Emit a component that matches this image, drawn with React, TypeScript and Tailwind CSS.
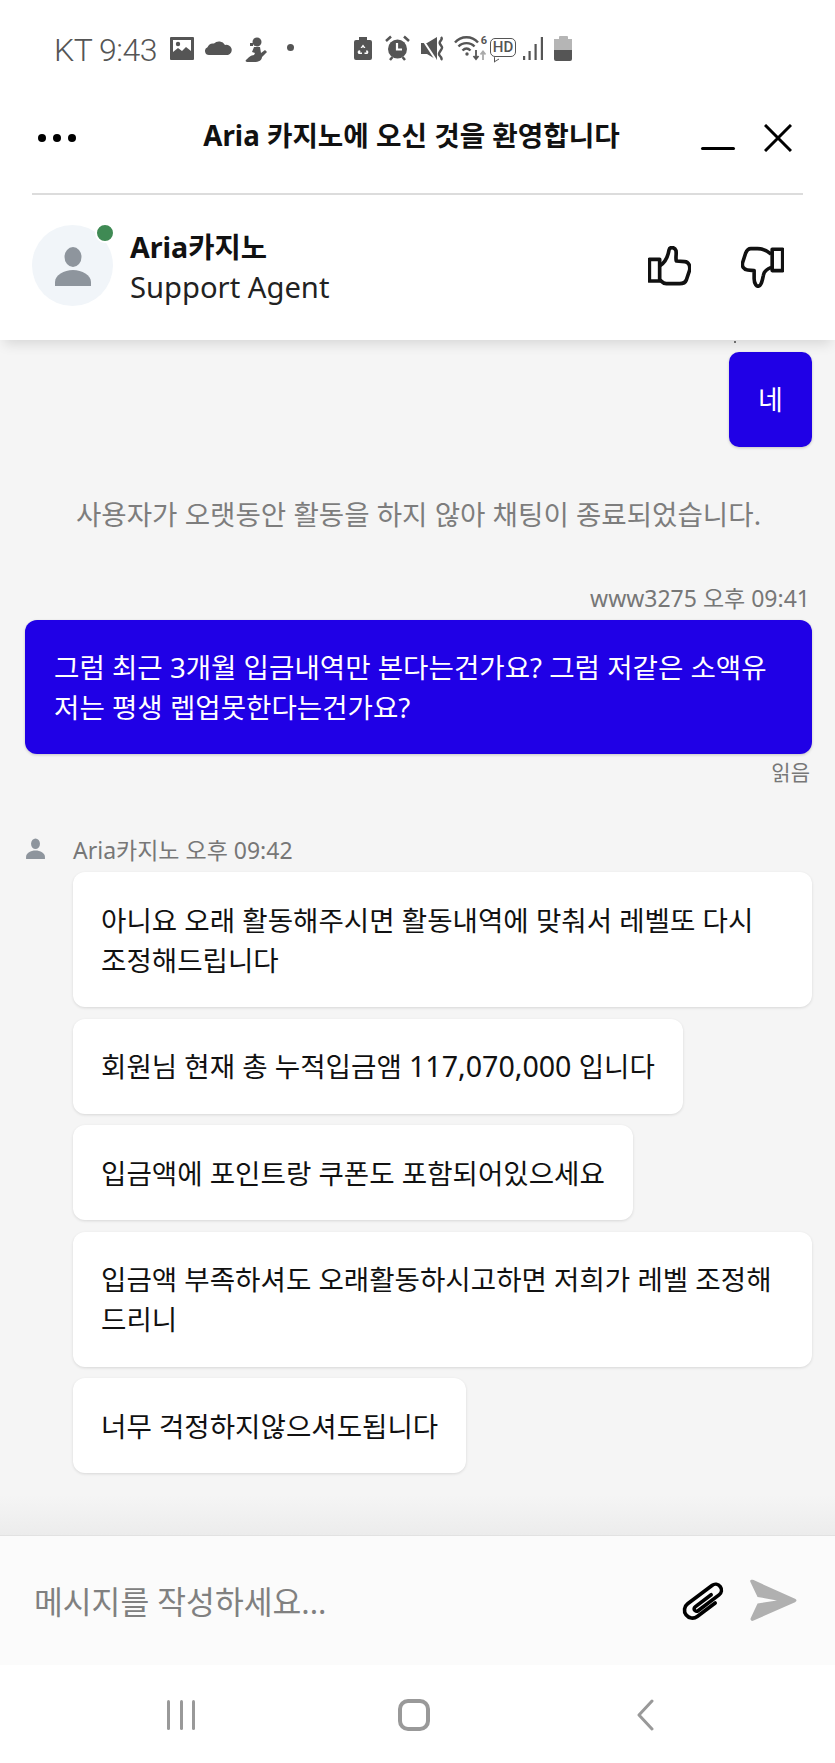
const agentMessages: React.ReactNode[][] = [
    ["아니요 오래 활동해주시면 활동내역에 맞춰서 레벨또 다시", "조정해드립니다"],
    [<>회원님 현재 총 누적입금앰 <span className="text-[28.6px]">117,070,000</span> 입니다</>],
    ["입금액에 포인트랑 쿠폰도 포함되어있으세요"],
    ["입금액 부족하셔도 오래활동하시고하면 저희가 레벨 조정해", "드리니"],
    ["너무 걱정하지않으셔도됩니다"],
];

const PersonIcon: React.FC<{ className: string }> = ({ className }) => (
    <svg viewBox="0 0 40 40" className={className} fill="#8e959d">
        <ellipse cx="20" cy="11" rx="8.5" ry="10" />
        <path d="M2 40v-4c0-7 9-12 18-12s18 5 18 12v4z" />
    </svg>
);

const StatusBar: React.FC = () => (
    <div className="h-[95px] flex items-start pt-[33px] pl-[54px] text-[#555555]">
        <span className="text-[32px] leading-[34px] tracking-[-0.5px] font-['Roboto',sans-serif] font-light w-[104px] whitespace-nowrap">KT 9:43</span>
        <svg viewBox="0 0 24 23" className="w-[24px] h-[23px] ml-[12px] mt-[4px]" fill="#555555">
            <path fillRule="evenodd" d="M1 0h22a1 1 0 0 1 1 1v21a1 1 0 0 1-1 1H1a1 1 0 0 1-1-1V1a1 1 0 0 1 1-1zM3 3v12l5-4 4 3 4-4 5 4V3z" />
            <circle cx="8" cy="7" r="2.2" />
        </svg>
        <svg viewBox="0 0 27 15" className="w-[27px] h-[15px] ml-[11px] mt-[7px]" fill="#555555">
            <path d="M4 15a4 4 0 0 1-1.500-7.700A6 6 0 0 1 9 3.500 7 7 0 0 1 20 5a5 5 0 0 1 3 10z" />
        </svg>
        <svg viewBox="0 0 22 25" className="w-[22px] h-[25px] ml-[13px] mt-[4px]" fill="#555555">
            <circle cx="12" cy="5" r="4.500" />
            <path d="M5 6h3v3H5zM9 10h6l1 6 4-3 2 2-5 5c0 3-3 5-8 5H2c-1 0-2-1-1-2 2-2 5-5 8-5l1-2-3-1z" />
        </svg>
        <div className="w-[7px] h-[7px] rounded-full bg-[#555555] ml-[20px] mt-[11px]" />
        <svg viewBox="0 0 18 23" className="w-[18px] h-[23px] ml-[60px] mt-[4px]" fill="#555555">
            <path d="M5 0h8v3h3a2 2 0 0 1 2 2v16a2 2 0 0 1-2 2H2a2 2 0 0 1-2-2V5a2 2 0 0 1 2-2h3z" />
            <path d="M9 7.500l2.500 3.500H10l-1-1-1 1H6.500zM5 13l1.500 1-.5 1.500h2V17H4.500L3.500 15zM13 13l1.500 2-1 2H10.500v-1.500h2L12 14z" fill="#ffffff" />
        </svg>
        <svg viewBox="0 0 25 26" className="w-[25px] h-[26px] ml-[13px] mt-[2px]">
            <circle cx="12.500" cy="14" r="9.500" fill="#555555" />
            <path d="M12 8v6.500h5" stroke="#ffffff" strokeWidth="2.200" fill="none" />
            <path d="M1 6l5-4.500M24 6l-5-4.500M5 25l2.500-3M20 25l-2.500-3" stroke="#555555" strokeWidth="2.500" />
        </svg>
        <svg viewBox="0 0 24 25" className="w-[24px] h-[25px] ml-[11px] mt-[3px]" fill="#555555">
            <path d="M0 7h6l10-6v23L6 18H0z" />
            <path d="M0 1l15 23" stroke="#ffffff" strokeWidth="2" />
            <path d="M20 1c3 3-3 4-1 7s3 3 1 6-3 4-1 6 2 3 1 4" stroke="#555555" strokeWidth="2.400" fill="none" />
        </svg>
        <div className="relative w-[33px] h-[26px] ml-[9px] mt-[2px]">
            <svg viewBox="0 0 33 26" className="w-[33px] h-[26px]" fill="none" stroke="#555555" strokeWidth="2.400">
                <path d="M1 7.500c6-7 17-7 23 0M4.500 11.500c4-4.500 12-4.500 16 0M8.500 15.500c2.500-2.500 5.500-2.500 8 0" />
                <circle cx="13" cy="19" r="1.700" fill="#555555" stroke="none" />
                <path d="M22 15v9M19.500 21l2.500 3 2.500-3" strokeWidth="1.800" />
                <path d="M29 25v-8M26.500 19.500l2.500-3 2.500 3" stroke="#aaaaaa" strokeWidth="1.800" />
            </svg>
            <span className="absolute right-[0px] top-[0px] text-[11px] leading-[11px] font-bold font-['Roboto',sans-serif]">6</span>
        </div>
        <div className="relative w-[26px] h-[19px] ml-[3px] mt-[5px] border-[1.5px] border-[#555555] rounded-[5px] flex items-center justify-center text-[15px] leading-none font-medium font-['Roboto',sans-serif]">
            HD
            <div className="absolute left-[3px] bottom-[-5px] w-[5px] h-[5px] border-l-[1.5px] border-b-[1.5px] border-[#555555] -skew-y-[30deg]" />
        </div>
        <svg viewBox="0 0 20 23" className="w-[20px] h-[23px] ml-[7px] mt-[4px]" fill="#555555">
            <rect x="0" y="19" width="2.200" height="4" />
            <rect x="5.500" y="14" width="2.200" height="9" />
            <rect x="11.500" y="7" width="2.200" height="16" />
            <rect x="17.800" y="0" width="2.200" height="23" />
        </svg>
        <div className="w-[18px] h-[25px] ml-[11px] mt-[3px] flex flex-col items-center">
            <div className="w-[9px] h-[3px] bg-[#b5b5b5] rounded-t-[1px]" />
            <div className="w-full h-[11px] bg-[#b5b5b5]" />
            <div className="w-full h-[11px] bg-[#555555] rounded-b-[2px]" />
        </div>
    </div>
);

const Header: React.FC = () => (
    <div className="relative z-10 h-[245px] bg-white shadow-[0_8px_12px_-4px_rgba(0,0,0,0.12)]">
        <div className="mx-[32px] h-[100px] border-b-2 border-[#dcdcdc] flex items-start relative">
            <div className="flex gap-[7px] ml-[6px] mt-[39px]">
                <div className="w-[8px] h-[8px] rounded-full bg-black" />
                <div className="w-[8px] h-[8px] rounded-full bg-black" />
                <div className="w-[8px] h-[8px] rounded-full bg-black" />
            </div>
            <div className="flex-1 text-center pl-[110px] pr-[64px] text-[27.7px] leading-[38px] mt-[21px] font-bold text-[#111111] whitespace-nowrap">Aria 카지노에 오신 것을 환영합니다</div>
            <div className="w-[34px] h-[3px] bg-black mt-[52px] rounded-full" />
            <svg viewBox="0 0 28 28" className="w-[28px] h-[28px] ml-[29px] mt-[29px] mr-[11px]" fill="none" stroke="#000000" strokeWidth="3">
                <path d="M1 1l26 26M27 1L1 27" />
            </svg>
        </div>
        <div className="flex items-start mx-[32px] mt-[30px]">
            <div className="relative w-[81px] h-[81px] rounded-full bg-[#f1f5f9] flex items-center justify-center">
                <PersonIcon className="w-[40px] h-[40px]" />
                <div className="absolute top-[-2px] right-[-2px] w-[20px] h-[20px] rounded-full bg-[#3f8a54] border-2 border-white" />
            </div>
            <div className="ml-[17px] mt-[2px]">
                <div className="text-[28.6px] leading-[40px] font-bold text-[#111111]">Aria카지노</div>
                <div className="text-[29.2px] leading-[40px] text-[#222222]">Support Agent</div>
            </div>
            <svg viewBox="0 0 129 120" className="w-[43px] h-[40px] ml-auto mt-[21px]" fill="none" stroke="#111111" strokeWidth="11" strokeLinejoin="round">
                <path d="M4 40h31v65H4z" />
                <path d="M37 58C50 50 60 30 63 12C65 2 80 2 84 14C86 25 82 35 85 45L110 47C122 48 127 60 125 72L115 102C112 110 105 113 95 113L55 113C45 113 40 105 37 103" />
            </svg>
            <svg viewBox="0 0 131 128" className="w-[43px] h-[42px] ml-[50px] mt-[21px] mr-[19px]" fill="none" stroke="#111111" strokeWidth="11" strokeLinejoin="round">
                <path d="M95 10h32v65H95z" />
                <path d="M92 25C80 14 65 8 50 8L30 8C22 8 18 12 14 22L5 50C2 62 8 72 20 73L40 75L40 100C40 115 48 125 54 122C62 120 65 105 68 90C70 78 78 70 92 65" />
            </svg>
        </div>
    </div>
);

const Chat: React.FC = () => (
    <div className="relative flex-1 overflow-hidden bg-[#f5f5f5] pt-[12px] pl-[25px] pr-[23px]">
        <div className="absolute top-[1px] right-[99px] w-[2px] h-[2px] bg-[#777777]" />
        <div className="flex justify-end">
            <div className="w-[83px] h-[95px] bg-[#2000e6] rounded-[10px] shadow-[0_1px_3px_rgba(0,0,0,0.2)] text-white text-[27px] pt-[2px] flex items-center justify-center">네</div>
        </div>
        <p className="mt-[45px] text-center text-[#7d7d7d] text-[27.6px] leading-[44px] whitespace-nowrap">사용자가 오랫동안 활동을 하지 않아 채팅이 종료되었습니다.</p>
        <p className="mt-[45px] text-right text-[#777777] text-[23px] leading-[34px] pr-[2px]">www3275 오후 09:41</p>
        <div className="mt-[5px] h-[134px] bg-[#2000e6] rounded-[12px] shadow-[0_1px_3px_rgba(0,0,0,0.2)] text-white text-[27.6px] leading-[40px] pl-[29px] pr-[20px] pt-[27px] whitespace-nowrap">
            그럼 최근 3개월 입금내역만 본다는건가요? 그럼 저같은 소액유<br />저는 평생 렙업못한다는건가요?
        </div>
        <p className="mt-[1px] text-right text-[#777777] text-[21px] leading-[34px] pr-[2px]">읽음</p>
        <div className="mt-[44px] flex items-center h-[34px]">
            <PersonIcon className="w-[21px] h-[21px] -mt-[4px]" />
            <span className="ml-[27px] text-[#777777] text-[23px] leading-[34px]">Aria카지노 오후 09:42</span>
        </div>
        <div className="mt-[5px] flex flex-col items-start gap-[11.5px] ml-[48px]">
            {agentMessages.map((lines, i) => (
                <div key={i} className={`bg-white rounded-[12px] shadow-[0_1px_3px_rgba(0,0,0,0.12)] text-[#111111] text-[27.6px] leading-[40px] px-[28px] py-[27.5px] whitespace-nowrap ${lines.length > 1 ? "w-full" : ""}`}>
                    {lines.map((line, j) => <div key={j}>{line}</div>)}
                </div>
            ))}
        </div>
        <div className="absolute inset-x-0 bottom-0 h-[40px] bg-gradient-to-b from-[#f5f5f5] to-[#ececec]" />
    </div>
);

const App: React.FC = () => {
    return (
        <div className="w-[835px] h-[1763px] flex flex-col bg-white overflow-hidden font-['Noto_Sans','Noto_Sans_CJK_KR',sans-serif]">
            <StatusBar />
            <Header />
            <Chat />
            <div className="h-[130px] bg-[#fbfbfb] border-t border-[#e2e2e2] flex items-start pl-[34px]">
                <span className="text-[31.3px] leading-[44px] mt-[44px] text-[#808080]">메시지를 작성하세요...</span>
                <svg viewBox="40 35 130 115" className="w-[45px] h-[40px] ml-auto mt-[46px]" fill="none" stroke="#000000" strokeWidth="10.500" strokeLinecap="round">
                    <path transform="translate(105 92) rotate(-37)" d="M25 23H-40a23 23 0 0 1 0-46H48a17 17 0 0 1 0 34H-28a7 7 0 0 1 0-14H30" />
                </svg>
                <svg viewBox="0 0 146 130" className="w-[48px] h-[43px] ml-[23px] mt-[43px] mr-[38px]" fill="#b0b0b0">
                    <path d="M4 8C2 2 8 0 14 3L140 60C146 63 146 67 140 70L14 126C8 129 3 125 5 119L26 74L85 65L26 54Z" />
                </svg>
            </div>
            <div className="h-[98px] flex items-start">
                <div className="flex gap-[9.500px] ml-[167px] mt-[35px]">
                    <div className="w-[3px] h-[30px] bg-[#999999] rounded-full" />
                    <div className="w-[3px] h-[30px] bg-[#999999] rounded-full" />
                    <div className="w-[3px] h-[30px] bg-[#999999] rounded-full" />
                </div>
                <div className="w-[32px] h-[32px] ml-[203px] mt-[34px] border-[4px] border-[#999999] rounded-[10px]" />
                <svg viewBox="0 0 20 32" className="w-[20px] h-[32px] ml-[205px] mt-[34px]" fill="none" stroke="#999999" strokeWidth="3" strokeLinecap="round" strokeLinejoin="round">
                    <path d="M17 2L4 16l13 14" />
                </svg>
            </div>
        </div>
    );
};

export default App;
